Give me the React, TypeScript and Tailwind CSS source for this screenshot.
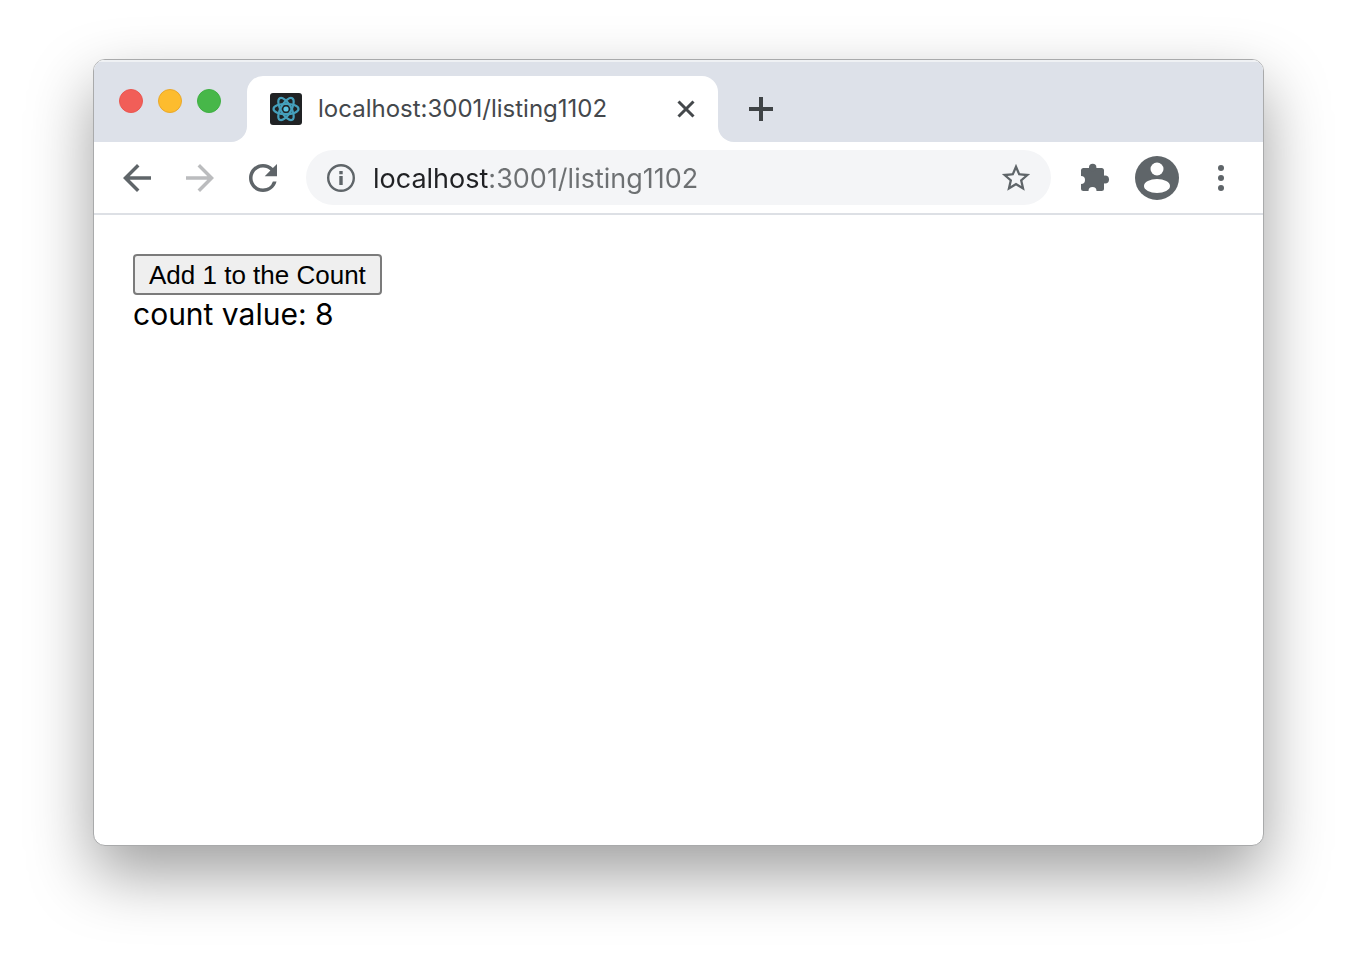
import React, { useState } from "react";
import { MdArrowBack, MdArrowForward, MdRefresh, MdStarBorder } from "react-icons/md";

const ReactFavicon = () => (
    <svg viewBox="0 0 32 32" className="size-8 shrink-0" aria-hidden="true">
        <rect width="32" height="32" rx="3" fill="#202224" />
        <g fill="none" stroke="#459fbb" strokeWidth="2.2">
            <ellipse cx="16" cy="16" rx="12.500" ry="5.200" />
            <ellipse cx="16" cy="16" rx="12.500" ry="5.200" transform="rotate(60 16 16)" />
            <ellipse cx="16" cy="16" rx="12.500" ry="5.200" transform="rotate(120 16 16)" />
        </g>
        <circle cx="16" cy="16" r="2.6" fill="#5cc3e2" />
    </svg>
);

const InfoIcon = () => (
    <svg viewBox="0 0 34 34" className="size-[34px] shrink-0" aria-hidden="true">
        <circle cx="17" cy="17" r="12.800" fill="none" stroke="#5f6569" strokeWidth="2.4" />
        <path d="M15.300 15h3.400v9h-3.400zM15.300 10h3.400v3.200h-3.400z" fill="#5f6569" />
    </svg>
);

const PuzzleIcon = () => (
    <svg viewBox="0 0 32 32" className="size-8" aria-hidden="true">
        <g fill="#5f6569">
            <rect x="3" y="6" width="23" height="23" rx="2.500" />
            <circle cx="14.700" cy="5.500" r="3.700" />
            <circle cx="27" cy="17.500" r="4" />
        </g>
        <g fill="#fff">
            <circle cx="3" cy="18" r="4" />
            <circle cx="14.500" cy="29" r="4" />
        </g>
    </svg>
);

const ProfileIcon = () => (
    <svg viewBox="0 0 44 44" className="size-11" aria-hidden="true">
        <circle cx="22" cy="22" r="22" fill="#5f6569" />
        <circle cx="22" cy="13" r="6.5" fill="#fff" />
        <ellipse cx="22" cy="30" rx="13" ry="7" fill="#fff" />
    </svg>
);

const WindowControls = () => (
    <div className="flex gap-[15px]">
        <button aria-label="Close window" className="size-6 rounded-full border border-[#ea5650] bg-[#f15e58]" />
        <button aria-label="Minimize window" className="size-6 rounded-full border border-[#eaa82a] bg-[#fdbc2e]" />
        <button aria-label="Zoom window" className="size-6 rounded-full border border-[#3fb043] bg-[#47b749]" />
    </div>
);

const TabStrip = () => (
    <div className="flex h-[82px] border-t-2 border-[#eff1f4] bg-white">
        <div className="w-[153px] shrink-0 rounded-br-2xl bg-[#dde1e9] pt-[27px] pl-[25px]">
            <WindowControls />
        </div>

        {/* the strip colour only shows behind the rounded top corners */}
        <div className="w-[471px] bg-[linear-gradient(#dde1e9_40px,white_40px)] pt-[14px]">
            <div className="flex h-[66px] items-center rounded-t-2xl bg-white pr-[22px] pl-[23px]">
                <ReactFavicon />
                <span className="ml-4 flex-1 text-2xl whitespace-nowrap text-[#44484c]">localhost:3001/listing1102</span>
                <button aria-label="Close tab">
                    <svg viewBox="0 0 20 20" className="size-5" fill="none" stroke="#44484b" strokeWidth="3">
                        <path d="M2.500 2.500l15 15M17.500 2.500l-15 15" />
                    </svg>
                </button>
            </div>
        </div>

        <div className="flex flex-1 items-center rounded-bl-2xl bg-[#dde1e9] pt-[14px] pl-[31px]">
            <button aria-label="New tab">
                <svg viewBox="0 0 24 24" className="size-6" fill="none" stroke="#3f4346" strokeWidth="4">
                    <path d="M12 0v24M0 12h24" />
                </svg>
            </button>
        </div>
    </div>
);

const Toolbar = () => (
    <div className="flex h-[73px] items-center border-b-2 border-[#dde0e5] bg-white pr-[38px] pl-[22px] text-[#5f6569]">
        <div className="flex gap-[21px]">
            <button aria-label="Back"><MdArrowBack size={42} /></button>
            <button aria-label="Forward" className="text-[#bbbcbe]"><MdArrowForward size={42} /></button>
            <button aria-label="Reload"><MdRefresh size={42} /></button>
        </div>

        <div className="ml-[22px] flex h-[55px] flex-1 items-center rounded-full bg-[#f4f5f7] px-[18px]">
            <InfoIcon />
            {/* host is darker than the rest of the address */}
            <input
                aria-label="Address"
                defaultValue="localhost:3001/listing1102"
                className="ml-[15px] min-w-0 flex-1 bg-[linear-gradient(to_right,#202124_115px,#6d7072_115px)] bg-clip-text pt-1 text-[27px] text-transparent outline-none"
            />
            <button aria-label="Bookmark"><MdStarBorder size={34} /></button>
        </div>

        <div className="ml-[27px] flex items-center">
            <button aria-label="Extensions"><PuzzleIcon /></button>
            <button aria-label="Profile" className="ml-[25px]"><ProfileIcon /></button>
            <button aria-label="Menu" className="ml-[38px]">
                <svg viewBox="0 0 8 28" className="h-7 w-2" fill="currentColor">
                    <circle cx="4" cy="4" r="3" />
                    <circle cx="4" cy="14" r="3" />
                    <circle cx="4" cy="24" r="3" />
                </svg>
            </button>
        </div>
    </div>
);

export default function App() {
    const [count, setCount] = useState(8);

    return (
        <div className="flex min-h-screen flex-col bg-white px-[93px] pt-[59px] pb-[130px] font-['Inter',sans-serif]">
            <div className="flex flex-1 flex-col overflow-hidden rounded-xl border border-[#a9aaab] bg-white shadow-[0_28px_64px_rgba(0,0,0,0.38)]">
                <TabStrip />
                <Toolbar />
                <main className="flex flex-1 flex-col items-start px-[39px] pt-[39px]">
                    <button
                        onClick={() => setCount(count + 1)}
                        className="h-[41px] rounded-sm border-2 border-[#7b7b7b] bg-[#efefef] px-[14px] font-['Liberation_Sans',sans-serif] text-[26px] leading-9 text-black"
                    >
                        Add 1 to the Count
                    </button>
                    <p className="text-[30px] leading-[38px] text-black">count value: {count}</p>
                </main>
            </div>
        </div>
    );
}
